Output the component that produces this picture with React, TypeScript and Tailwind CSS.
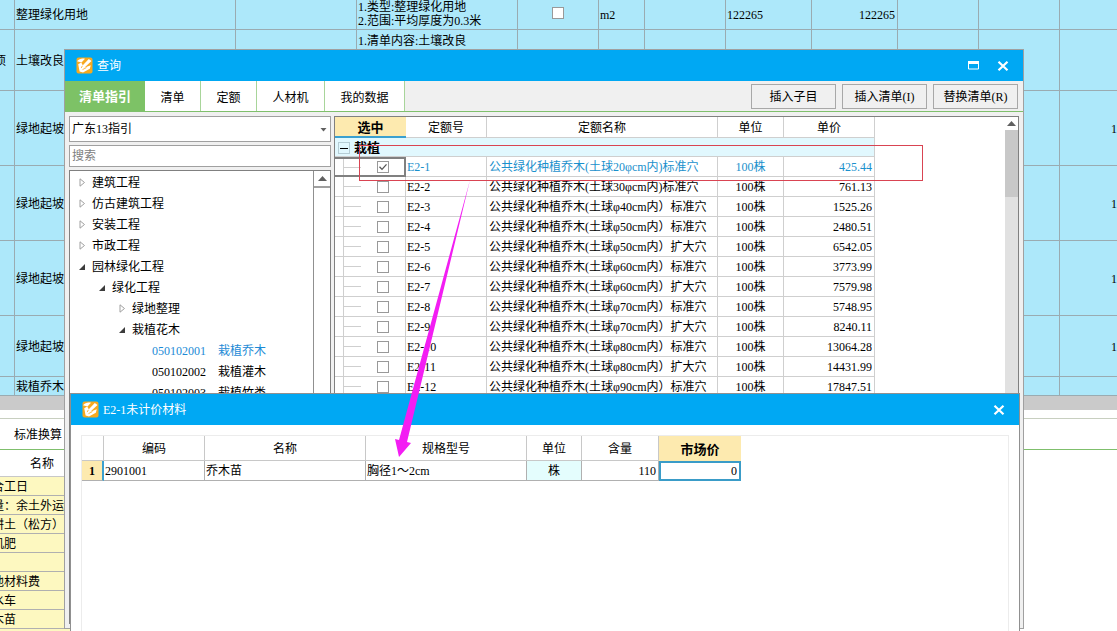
import React from "react";

const billRows = [
    {height: "h-[30px]", kind: "", name: "整理绿化用地", spec: ["1.类型:整理绿化用地", "2.范围:平均厚度为0.3米"], check: true, unit: "m2", qty: "122265", total: "122265", last: ""},
    {height: "h-[61px]", kind: "项", name: "土壤改良", spec: ["1.清单内容:土壤改良"], last: ""},
    {height: "h-[75px]", kind: "", name: "绿地起坡", last: "1"},
    {height: "h-[75px]", kind: "", name: "绿地起坡", last: "1"},
    {height: "h-[75px]", kind: "", name: "绿地起坡", last: "1"},
    {height: "h-[61px]", kind: "", name: "绿地起坡", last: "1"},
    {height: "h-[19px]", kind: "", name: "栽植乔木", last: ""},
];

const resources = ["合工日", "量：余土外运", "耕土（松方）", "机肥", "", "他材料费", "水车", "木苗", ""];

const tabs = [
    {label: "清单", width: "w-[56px]"},
    {label: "定额", width: "w-[56px]"},
    {label: "人材机", width: "w-[68px]"},
    {label: "我的数据", width: "w-[80px]"},
];

const tree = [
    {indent: "pl-2", open: false, label: "建筑工程"},
    {indent: "pl-2", open: false, label: "仿古建筑工程"},
    {indent: "pl-2", open: false, label: "安装工程"},
    {indent: "pl-2", open: false, label: "市政工程"},
    {indent: "pl-2", open: true, label: "园林绿化工程"},
    {indent: "pl-7", open: true, label: "绿化工程"},
    {indent: "pl-12", open: false, label: "绿地整理"},
    {indent: "pl-12", open: true, label: "栽植花木"},
];

const treeItems = [
    {code: "050102001", label: "栽植乔木", active: true},
    {code: "050102002", label: "栽植灌木", active: false},
    {code: "050102003", label: "栽植竹类", active: false},
];

const quotas = [
    {code: "E2-1", name: "公共绿化种植乔木(土球20φcm内)标准穴", price: "425.44"},
    {code: "E2-2", name: "公共绿化种植乔木(土球30φcm内)标准穴", price: "761.13"},
    {code: "E2-3", name: "公共绿化种植乔木(土球φ40cm内）标准穴", price: "1525.26"},
    {code: "E2-4", name: "公共绿化种植乔木(土球φ50cm内）标准穴", price: "2480.51"},
    {code: "E2-5", name: "公共绿化种植乔木(土球φ50cm内）扩大穴", price: "6542.05"},
    {code: "E2-6", name: "公共绿化种植乔木(土球φ60cm内）标准穴", price: "3773.99"},
    {code: "E2-7", name: "公共绿化种植乔木(土球φ60cm内）扩大穴", price: "7579.98"},
    {code: "E2-8", name: "公共绿化种植乔木(土球φ70cm内）标准穴", price: "5748.95"},
    {code: "E2-9", name: "公共绿化种植乔木(土球φ70cm内）扩大穴", price: "8240.11"},
    {code: "E2-10", name: "公共绿化种植乔木(土球φ80cm内）标准穴", price: "13064.28"},
    {code: "E2-11", name: "公共绿化种植乔木(土球φ80cm内）扩大穴", price: "14431.99"},
    {code: "E2-12", name: "公共绿化种植乔木(土球φ90cm内）标准穴", price: "17847.51"},
];

const AppIcon = () => (
    <svg width="17" height="17" viewBox="0 0 17 17">
        <rect x="0.5" y="0.5" width="16" height="16" rx="2" fill="#f7a91e"/>
        <path d="M1 4.200C3.500 1.200 6.500 1 9 1.800L5.500 5.600z" fill="#fff"/>
        <path d="M2.200 7.200l3-1.600 1.600 2.600L12.800 2l2.700 2-7.200 6.800 6.500-2.600-1 3.600-6.800 3.600-3.400-.8z" fill="#fff"/>
        <path d="M5.200 11l1.200-2.200M6.500 12.600l4-2" stroke="#f7a91e" strokeWidth=".8" fill="none"/>
    </svg>
);

const CloseIcon = () => (
    <svg width="12" height="10" viewBox="0 0 12 10">
        <path d="M1.500 .8l9 8.400M10.500 .8l-9 8.400" stroke="#fff" strokeWidth="2.200"/>
    </svg>
);

const Arrow = ({open}: {open: boolean}) =>
    open ? (
        <svg width="8" height="8" viewBox="0 0 8 8">
            <path d="M7 1v6H1z" fill="#3c3c3c"/>
        </svg>
    ) : (
        <svg width="8" height="9" viewBox="0 0 8 9">
            <path d="M2 .8l4.500 3.700L2 8.200z" fill="#fff" stroke="#a0a0a0"/>
        </svg>
    );

const UpArrow = () => (
    <svg width="9" height="5" viewBox="0 0 9 5">
        <path d="M4.500 0L9 5H0z" fill="#606060"/>
    </svg>
);

const Check = ({label, checked = false}: {label: string; checked?: boolean}) => (
    <span className="relative block w-3 h-3">
        <input
            type="checkbox"
            aria-label={label}
            defaultChecked={checked}
            className="peer block appearance-none w-3 h-3 bg-white border border-[#999999]"
        />
        <svg className="hidden peer-checked:block absolute inset-0 pointer-events-none" width="12" height="12" viewBox="0 0 12 12">
            <path d="M2.500 5.800l2.500 2.600 4.500-5" fill="none" stroke="#555" strokeWidth="1.300"/>
        </svg>
    </span>
);

const BillTable = () => {
    const cell = "p-0 border-r border-b border-[#9aabb1]";
    return (
        <table className="w-full table-fixed border-separate border-spacing-0 bg-[#ade8fa]">
            <colgroup>
                <col className="w-[15px]"/>
                <col className="w-[221px]"/>
                <col className="w-[121px]"/>
                <col className="w-[161px]"/>
                <col className="w-[81px]"/>
                <col className="w-[46px]"/>
                <col className="w-[81px]"/>
                <col className="w-[86px]"/>
                <col className="w-[86px]"/>
                <col className="w-[81px]"/>
                <col className="w-[81px]"/>
                <col/>
            </colgroup>
            <tbody>
                {billRows.map((row, i) => (
                    <tr key={i} className={row.height}>
                        <td className={`${cell} pt-0.5`}>
                            <div className="flex justify-end overflow-hidden pr-2">{row.kind}</div>
                        </td>
                        <td className={`${cell} pl-px ${i > 0 ? "pt-0.5" : ""}`}>{row.name}</td>
                        <td className={cell}></td>
                        <td className={`${cell} pl-px align-top leading-[14px]`}>
                            <div className={row.check ? "" : "pt-1"}>
                                {row.spec?.map((line) => <div key={line}>{line}</div>)}
                            </div>
                        </td>
                        <td className={`${cell} pb-1`}>
                            {row.check && <div className="flex justify-center"><Check label="主要清单"/></div>}
                        </td>
                        <td className={`${cell} pl-px`}>{row.unit}</td>
                        <td className={cell}></td>
                        <td className={`${cell} pl-px`}>{row.qty}</td>
                        <td className={`${cell} pr-0.5 text-right`}>{row.total}</td>
                        <td className={cell}></td>
                        <td className={cell}></td>
                        <td className="p-0 pt-0.5 border-b border-[#9aabb1] text-right">{row.last}</td>
                    </tr>
                ))}
            </tbody>
        </table>
    );
};

const ResourcePanel = () => (
    <div className="flex-1 bg-white pt-2">
        <div className="border-t border-t-[#c8cfc0] border-b border-b-[#7fbf6c] h-8 flex items-center pl-3.5 pt-0.5">
            标准换算
        </div>
        <div className="w-1/3">
            <div className="h-[27px] flex items-center pl-[30px] pt-0.5 border-b border-[#c8c8c8]">名称</div>
            {resources.map((name, i) => (
                <div key={i} className="h-[19px] flex items-center pt-0.5 overflow-hidden bg-[#fdf8c0] border-b border-[#b0b0b0]">
                    <span className="-ml-2 whitespace-nowrap">{name}</span>
                </div>
            ))}
        </div>
    </div>
);

const Sidebar = () => (
    <div className="flex flex-col gap-[3px] w-[262px] shrink-0">
        <div className="relative">
            <select
                aria-label="指引"
                className="block appearance-none w-full h-[26px] pl-0.5 bg-white border border-[#a0a0a0] outline-none"
            >
                <option>广东13指引</option>
            </select>
            <svg className="absolute right-1 top-3 pointer-events-none" width="7" height="4" viewBox="0 0 7 4">
                <path d="M0.500 0h6l-3 3.500z" fill="#606060"/>
            </svg>
        </div>
        <input
            type="text"
            aria-label="搜索"
            placeholder="搜索"
            className="block w-full h-[22px] pl-0.5 bg-white border border-[#a0a0a0] outline-none placeholder:text-[#808080]"
        />
        <div className="flex flex-1 min-h-0 bg-white border border-[#808080]">
            <ul className="flex-1 overflow-hidden pt-px">
                {tree.map((node) => (
                    <li key={node.label} className={`h-[21px] flex items-center gap-1.5 ${node.indent}`}>
                        <Arrow open={node.open}/>
                        {node.label}
                    </li>
                ))}
                {treeItems.map((item) => (
                    <li
                        key={item.code}
                        className={`h-[21px] flex items-center gap-3 pl-[82px] ${item.active ? "text-[#1c8ad6]" : ""}`}
                    >
                        <span>{item.code}</span>
                        <span>{item.label}</span>
                    </li>
                ))}
            </ul>
            <div className="w-[17px] border-l border-[#909090]">
                <div className="h-[17px] flex items-center justify-center border-b-2 border-[#a0a0a0]">
                    <UpArrow/>
                </div>
            </div>
        </div>
    </div>
);

const QuotaTable = () => {
    const cell = "p-0 border-r border-b border-[#cfcfcf]";
    const head = `${cell} pt-0.5 font-normal`;
    return (
        <div className="flex flex-1 min-w-0 bg-white border border-[#808080] overflow-hidden">
            <div className="flex-1">
                <table className="w-[540px] table-fixed border-separate border-spacing-0">
                    <colgroup>
                        <col className="w-[71px]"/>
                        <col className="w-[81px]"/>
                        <col className="w-[231px]"/>
                        <col className="w-[66px]"/>
                        <col className="w-[91px]"/>
                    </colgroup>
                    <thead>
                        <tr className="h-[21px]">
                            <th className="p-0 pt-0.5 bg-[#fdeaaf] border-b-2 border-[#3aa0d0] font-bold text-[13px] leading-4">选中</th>
                            <th className={head}>定额号</th>
                            <th className={head}>定额名称</th>
                            <th className={head}>单位</th>
                            <th className={head}>单价</th>
                        </tr>
                    </thead>
                    <tbody>
                        <tr className="h-[19px] bg-[#e1f8fe]">
                            <td colSpan={5} className={cell}>
                                <div className="flex items-center gap-1 pl-[3px] pt-0.5 font-bold text-[13px] leading-4">
                                    <button aria-label="折叠" className="w-3 h-3 flex items-center justify-center border border-[#b5cdd5]">
                                        <span className="w-2 h-px bg-black"></span>
                                    </button>
                                    栽植
                                </div>
                            </td>
                        </tr>
                        {quotas.map((q, i) => (
                            <tr key={q.code} className={`h-5 ${i === 0 ? "text-[#1a90cc]" : ""}`}>
                                <td className={i === 0 ? "p-0 border-2 border-l-0 border-[#808080]" : cell}>
                                    <div className={`flex items-center ml-2 border-l border-[#cfcfcf] ${i === 0 ? "h-4" : "h-[19px]"}`}>
                                        <span className="w-[17px] h-px bg-[#cfcfcf] mr-4"></span>
                                        <Check label={q.code} checked={i === 0}/>
                                    </div>
                                </td>
                                <td className={`${cell} pt-px pl-px`}>{q.code}</td>
                                <td className={`${cell} pt-px pl-0.5 whitespace-nowrap`}>{q.name}</td>
                                <td className={`${cell} pt-px text-center`}>100株</td>
                                <td className={`${cell} pt-px pr-0.5 text-right`}>{q.price}</td>
                            </tr>
                        ))}
                    </tbody>
                </table>
            </div>
            <div className="w-[13px] bg-[#e1e1e1]">
                <div className="h-[13px] flex items-center justify-center bg-white">
                    <UpArrow/>
                </div>
                <div className="h-[67px] bg-[#c8c8c8]"></div>
            </div>
        </div>
    );
};

const QueryWindow = () => (
    <section className="absolute left-16 right-[93px] top-[49px] h-[580px] flex flex-col bg-[#f0f0f0] border border-[#a0a0a0]">
        <header className="h-[31px] shrink-0 flex items-center bg-[#00a8f3] text-white pl-[11px] pr-3.5">
            <AppIcon/>
            <h1 className="pl-1 flex-1">查询</h1>
            <button aria-label="最大化" className="mr-[18px]">
                <svg width="11" height="9" viewBox="0 0 11 9">
                    <path d="M.5 .5h10v7.500H.5z" fill="none" stroke="#fff"/>
                    <path d="M0 0h11v3H0z" fill="#fff"/>
                </svg>
            </button>
            <button aria-label="关闭">
                <CloseIcon/>
            </button>
        </header>
        <div className="h-[31px] shrink-0 flex items-center justify-between pr-[5px] border-b border-[#7fbf6c]">
            <nav className="flex h-full">
                <button className="w-20 pt-0.5 bg-[#7dc266] text-white text-[13px] font-bold">清单指引</button>
                {tabs.map((tab) => (
                    <button key={tab.label} className={`${tab.width} pt-1 bg-white border-r border-[#a8d59a]`}>
                        {tab.label}
                    </button>
                ))}
            </nav>
            <div className="flex gap-[6px]">
                {["插入子目", "插入清单(I)", "替换清单(R)"].map((label) => (
                    <button key={label} className="w-[85px] h-[25px] pt-0.5 border border-[#a8a8a8]">{label}</button>
                ))}
            </div>
        </div>
        <div className="flex flex-1 min-h-0 gap-[3px] px-1 py-1">
            <Sidebar/>
            <QuotaTable/>
        </div>
    </section>
);

const MaterialWindow = () => {
    const head = "p-0 pt-0.5 font-normal border-r border-b border-[#c8c8c8]";
    const cell = "p-0 pt-px border-r border-b border-[#b0b0b0]";
    return (
        <section className="absolute left-[70px] right-[97px] top-[393px] bottom-0 flex flex-col bg-white border border-b-0 border-[#909090]">
            <header className="h-[31px] shrink-0 flex items-center bg-[#00a8f3] text-white pl-[11px] pr-3.5">
                <AppIcon/>
                <h2 className="pl-1 flex-1">E2-1未计价材料</h2>
                <button aria-label="关闭">
                    <CloseIcon/>
                </button>
            </header>
            <div className="flex-1 mt-2.5 mx-2.5 border border-b-0 border-[#ececec]">
                <table className="w-[659px] table-fixed border-separate border-spacing-0">
                    <colgroup>
                        <col className="w-[22px]"/>
                        <col className="w-[101px]"/>
                        <col className="w-[161px]"/>
                        <col className="w-[161px]"/>
                        <col className="w-[55px]"/>
                        <col className="w-[77px]"/>
                        <col className="w-[82px]"/>
                    </colgroup>
                    <thead>
                        <tr className="h-[25px]">
                            <th className={head}></th>
                            <th className={head}>编码</th>
                            <th className={head}>名称</th>
                            <th className={head}>规格型号</th>
                            <th className={head}>单位</th>
                            <th className={head}>含量</th>
                            <th className="p-0 pt-0.5 font-bold text-[13px] bg-[#fdeaaf]">市场价</th>
                        </tr>
                    </thead>
                    <tbody>
                        <tr className="h-5">
                            <td className="p-0 pt-px text-center font-bold bg-[#fdeaaf] border-r-2 border-r-[#3aa0d0] border-b border-b-[#b0b0b0]">1</td>
                            <td className={`${cell} pl-px`}>2901001</td>
                            <td className={`${cell} pl-px`}>乔木苗</td>
                            <td className={`${cell} pl-px`}>胸径1～2cm</td>
                            <td className={`${cell} text-center bg-[#e4fdfd]`}>株</td>
                            <td className={`${cell} pr-0.5 text-right`}>110</td>
                            <td className="p-0 border-2 border-[#3a9cc8]">
                                <input
                                    type="text"
                                    aria-label="市场价"
                                    defaultValue="0"
                                    className="block w-full h-4 pr-0.5 text-right outline-none"
                                />
                            </td>
                        </tr>
                    </tbody>
                </table>
            </div>
        </section>
    );
};

export default function App() {
    return (
        <main className="relative h-screen overflow-hidden flex flex-col bg-white text-black text-xs font-['Liberation_Serif','Noto_Sans_CJK_SC',serif]">
            <BillTable/>
            <div className="h-3.5 shrink-0 bg-[#cacaca]"></div>
            <ResourcePanel/>
            <QueryWindow/>
            <MaterialWindow/>
            <div className="absolute left-[359px] top-[145px] w-[564px] h-9 border border-[#d94452] pointer-events-none"></div>
            <svg className="absolute left-[390px] top-[178px] pointer-events-none" width="90" height="282" viewBox="390 178 90 282">
                <path d="M470 180L399 440l-4-1 4 18 12-14-4-1z" fill="#f31df3"/>
            </svg>
        </main>
    );
}
